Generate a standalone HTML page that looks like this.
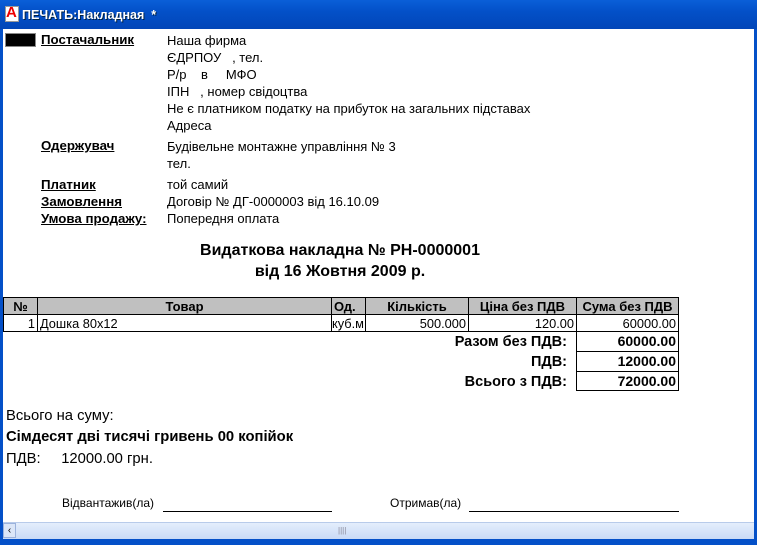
<!DOCTYPE html>
<html><head><meta charset="utf-8"><style>
*{margin:0;padding:0;box-sizing:border-box}
body{width:757px;height:545px;overflow:hidden;background:#fff;font-family:"Liberation Sans",Arial,sans-serif;font-size:13px;color:#000;position:relative}
.a{position:absolute;white-space:nowrap}
.b{font-weight:bold}
.u{text-decoration:underline}
#title{left:0;top:0;width:757px;height:29px;background:linear-gradient(#0a5fd8,#0350c8 40%,#0246b8);color:#fff;font-weight:bold;font-size:12.5px}
.c{position:absolute;border:1px solid #000;overflow:hidden;white-space:nowrap;line-height:17px;padding:0 2px;font-size:12.8px}
.h{background:#c0c0c0;font-weight:bold;text-align:center;font-size:13px;line-height:18px}
.r{text-align:right}
</style></head><body>
<div class="a" id="title">
 <div class="a" style="left:5px;top:6px;width:14px;height:16px;background:#fff;border:1px solid #999"></div>
 <div class="a" style="left:6px;top:4px;color:#e00;font-size:15px;font-weight:bold">A</div>
 <div class="a" style="left:22px;top:8px;text-shadow:1px 1px #024">ПЕЧАТЬ:Накладная&nbsp; *</div>
</div>
<div class="a" style="left:0;top:29px;width:3px;height:516px;background:#0450c8"></div>
<div class="a" style="left:754px;top:29px;width:3px;height:516px;background:#0450c8"></div>
<div class="a" style="left:0;top:539px;width:757px;height:6px;background:#0450c8"></div>
<div class="a" style="left:3px;top:522px;width:751px;height:17px;background:linear-gradient(#e4eefc,#c9daf6);border-top:1px solid #b8cbea"></div>
<div class="a" style="left:3px;top:523px;width:13px;height:15px;background:#dbe6f8;border:1px solid #9bb2dc;font-size:10px;text-align:center;line-height:13px">‹</div>
<div class="a" style="left:338px;top:526px;font-size:8px;color:#889">||||</div>

<div class="a" style="left:5px;top:33px;width:31px;height:14px;background:#000;border:1px solid #888"></div>
<div class="a b u" style="left:41px;top:32px;font-size:13.3px">Постачальник</div>
<div class="a" style="left:167px;top:32px;line-height:17px">Наша фирма<br>ЄДРПОУ&nbsp;&nbsp; , тел.<br>Р/р&nbsp;&nbsp;&nbsp; в&nbsp;&nbsp;&nbsp;&nbsp; МФО<br>ІПН&nbsp;&nbsp; , номер свідоцтва<br>Не є платником податку на прибуток на загальних підставах<br>Адреса</div>
<div class="a b u" style="left:41px;top:138px;font-size:13.3px">Одержувач</div>
<div class="a" style="left:167px;top:138px;line-height:17px">Будівельне монтажне управління № 3<br>тел.</div>
<div class="a b u" style="left:41px;top:176px;line-height:17px;font-size:13.3px">Платник<br>Замовлення<br>Умова продажу:</div>
<div class="a" style="left:167px;top:176px;line-height:17px">той самий<br>Договір № ДГ-0000003 від 16.10.09<br>Попередня оплата</div>

<div class="a b" style="left:0;width:680px;text-align:center;top:240px;font-size:16px;line-height:21px">Видаткова накладна № РН-0000001<br>від 16 Жовтня 2009 р.</div>

<div class="c h" style="left:3px;top:297px;width:35px;height:18px">№</div>
<div class="c h" style="left:37px;top:297px;width:295px;height:18px">Товар</div>
<div class="c h" style="left:331px;top:297px;width:35px;height:18px;text-align:left">Од.</div>
<div class="c h" style="left:365px;top:297px;width:104px;height:18px">Кількість</div>
<div class="c h" style="left:468px;top:297px;width:109px;height:18px">Ціна без ПДВ</div>
<div class="c h" style="left:576px;top:297px;width:103px;height:18px">Сума без ПДВ</div>
<div class="c r" style="left:3px;top:314px;width:35px;height:18px">1</div>
<div class="c" style="left:37px;top:314px;width:295px;height:18px">Дошка 80х12</div>
<div class="c" style="left:331px;top:314px;width:35px;height:18px;padding:0">куб.м</div>
<div class="c r" style="left:365px;top:314px;width:104px;height:18px">500.000</div>
<div class="c r" style="left:468px;top:314px;width:109px;height:18px">120.00</div>
<div class="c r" style="left:576px;top:314px;width:103px;height:18px">60000.00</div>
<div class="a b" style="left:370px;width:197px;text-align:right;top:332px;font-size:14.5px;line-height:20px">Разом без ПДВ:<br>ПДВ:<br>Всього з ПДВ:</div>
<div class="c r b" style="left:576px;top:331px;width:103px;height:21px;line-height:19px;font-size:14px">60000.00</div>
<div class="c r b" style="left:576px;top:351px;width:103px;height:21px;line-height:19px;font-size:14px">12000.00</div>
<div class="c r b" style="left:576px;top:371px;width:103px;height:20px;line-height:19px;font-size:14px">72000.00</div>

<div class="a" style="left:6px;top:408px;font-size:14.8px">Всього на суму:</div>
<div class="a b" style="left:6px;top:429px;font-size:14.8px">Сімдесят дві тисячі гривень 00 копійок</div>
<div class="a" style="left:6px;top:451px;font-size:14.8px">ПДВ:&nbsp;&nbsp;&nbsp;&nbsp; 12000.00 грн.</div>

<div class="a" style="left:62px;top:496px;font-size:12px">Відвантажив(ла)</div>
<div class="a" style="left:163px;top:511px;width:169px;border-top:1px solid #000"></div>
<div class="a" style="left:390px;top:496px;font-size:12px">Отримав(ла)</div>
<div class="a" style="left:469px;top:511px;width:210px;border-top:1px solid #000"></div>
</body></html>
